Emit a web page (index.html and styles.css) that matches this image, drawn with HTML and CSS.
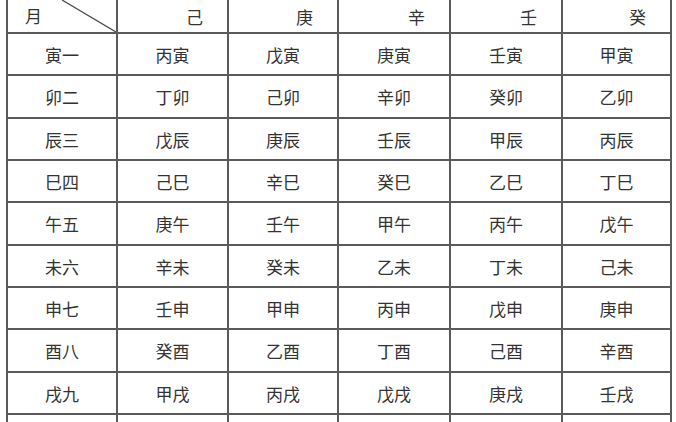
FILE: index.html
```html
<!DOCTYPE html>
<html lang="zh">
<head>
<meta charset="utf-8">
<title>月干支表</title>
<link rel="stylesheet" href="styles.css">
</head>
<body>
<div class="table">
  <div class="cell head corner">
    <span class="corner-label">月</span>
    <svg class="diag" viewBox="0 0 108 32" preserveAspectRatio="none"><line x1="54" y1="0" x2="108" y2="32"/></svg>
  </div>
  <div class="cell head">己</div>
  <div class="cell head">庚</div>
  <div class="cell head">辛</div>
  <div class="cell head">壬</div>
  <div class="cell head">癸</div>

  <div class="cell">寅一</div><div class="cell">丙寅</div><div class="cell">戊寅</div><div class="cell">庚寅</div><div class="cell">壬寅</div><div class="cell">甲寅</div>
  <div class="cell">卯二</div><div class="cell">丁卯</div><div class="cell">己卯</div><div class="cell">辛卯</div><div class="cell">癸卯</div><div class="cell">乙卯</div>
  <div class="cell">辰三</div><div class="cell">戊辰</div><div class="cell">庚辰</div><div class="cell">壬辰</div><div class="cell">甲辰</div><div class="cell">丙辰</div>
  <div class="cell">巳四</div><div class="cell">己巳</div><div class="cell">辛巳</div><div class="cell">癸巳</div><div class="cell">乙巳</div><div class="cell">丁巳</div>
  <div class="cell">午五</div><div class="cell">庚午</div><div class="cell">壬午</div><div class="cell">甲午</div><div class="cell">丙午</div><div class="cell">戊午</div>
  <div class="cell">未六</div><div class="cell">辛未</div><div class="cell">癸未</div><div class="cell">乙未</div><div class="cell">丁未</div><div class="cell">己未</div>
  <div class="cell">申七</div><div class="cell">壬申</div><div class="cell">甲申</div><div class="cell">丙申</div><div class="cell">戊申</div><div class="cell">庚申</div>
  <div class="cell">酉八</div><div class="cell">癸酉</div><div class="cell">乙酉</div><div class="cell">丁酉</div><div class="cell">己酉</div><div class="cell">辛酉</div>
  <div class="cell">戌九</div><div class="cell">甲戌</div><div class="cell">丙戌</div><div class="cell">戊戌</div><div class="cell">庚戌</div><div class="cell">壬戌</div>
  <div class="cell"></div><div class="cell"></div><div class="cell"></div><div class="cell"></div><div class="cell"></div><div class="cell"></div>
</div>
</body>
</html>
```

FILE: styles.css
```css
html, body {
  margin: 0;
  padding: 0;
  background: #ffffff;
  overflow: hidden;
}

body {
  font-family: "Noto Sans CJK SC", "Noto Sans CJK JP", sans-serif;
  font-weight: 400;
  color: #333333;
  font-size: 17px;
}

.table {
  display: grid;
  grid-template-columns: 110px 111px 110px 112px 112px 109px;
  grid-template-rows: 34px;
  grid-auto-rows: 42.33px;
  margin-left: 6px;
  width: max-content;
  border-left: 2px solid #5a5a5a;
}

.cell {
  box-sizing: border-box;
  border-right: 2px solid #5a5a5a;
  border-bottom: 2px solid #5a5a5a;
  display: flex;
  align-items: center;
  justify-content: center;
  line-height: 1;
  padding-top: 1px;
}

.head {
  justify-content: flex-end;
  padding-right: 24px;
  padding-top: 0;
}

.corner {
  position: relative;
  justify-content: flex-start;
  padding-left: 17px;
  padding-right: 0;
}

.corner-label {
  position: relative;
  top: -1px;
}

.diag {
  position: absolute;
  inset: 0;
  width: 100%;
  height: 100%;
}

.diag line {
  stroke: #4a4a4a;
  stroke-width: 1.3;
  vector-effect: non-scaling-stroke;
}
```
